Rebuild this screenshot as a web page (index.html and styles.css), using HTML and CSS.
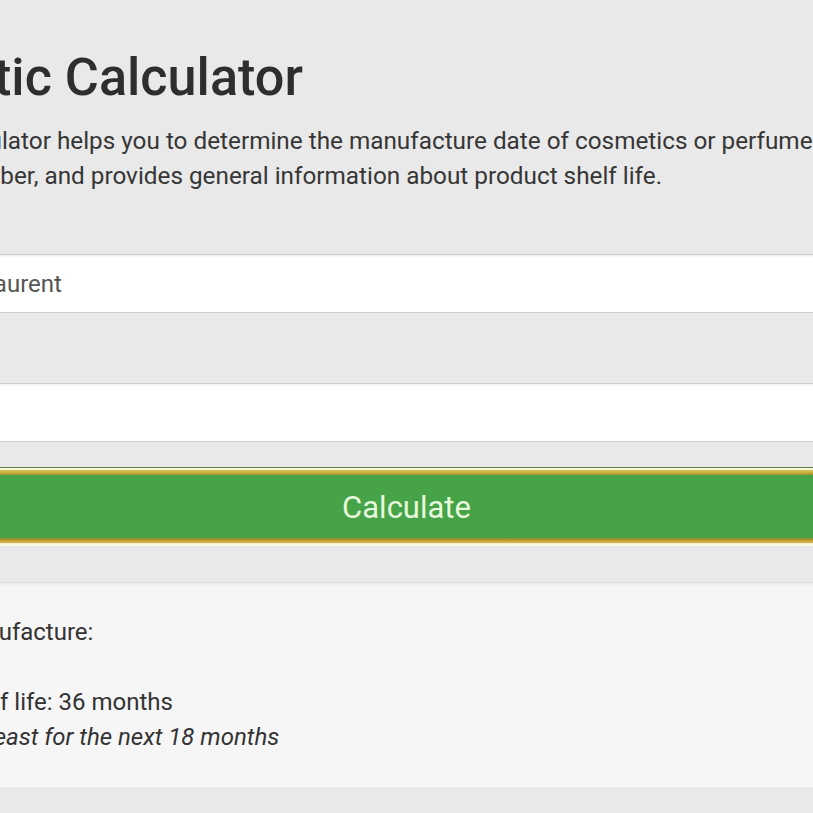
FILE: index.html
```html
<!DOCTYPE html>
<html lang="en">
<head>
<meta charset="utf-8">
<title>Cosmetic Calculator</title>
<link rel="stylesheet" href="styles.css">
</head>
<body>
<main class="page">
  <h1 class="title">Cosmetic Calculator</h1>
  <p class="intro">Cosmetic calculator helps you to determine the manufacture date of cosmetics or perfume<br>by a batch number, and provides general information about product shelf life.</p>
  <form class="form">
    <div class="field">
      <label class="label" for="brand">Brand</label>
      <input class="input" id="brand" type="text" value="Yves Saint Laurent">
    </div>
    <div class="field">
      <label class="label" for="code">Batch code</label>
      <input class="input" id="code" type="text" value="">
    </div>
    <button class="btn" type="button">Calculate</button>
  </form>
  <section class="result">
    <div class="row">Date of manufacture: <strong class="value"></strong></div>
    <div class="row spaced">Product shelf life: 36 months</div>
    <div class="row"><em>It's fresh at least for the next 18 months</em></div>
  </section>
</main>
</body>
</html>
```
FILE: styles.css
```css
html, body {
  margin: 0;
  padding: 0;
}
body {
  background: #e9e9e9;
  overflow: hidden;
  font-family: Roboto, "Liberation Sans", sans-serif;
  color: #333;
  width: 813px;
  height: 813px;
}
.page {
  margin: 0 -163px;
  width: 1139px;
}
.title {
  margin: 48px 0 0 -7px;
  font-size: 52.2px;
  line-height: 60px;
  font-weight: 500;
  color: #2e2e2e;
  white-space: nowrap;
}
.intro {
  margin: 15px 0 0 -2px;
  font-size: 24.3px;
  line-height: 35px;
  color: #363636;
  white-space: nowrap;
}
.form {
  margin: 16px 0 0;
  display: flex;
  flex-direction: column;
}
.field {
  display: flex;
  flex-direction: column;
  margin-bottom: 25px;
}
.label {
  font-size: 24px;
  line-height: 35px;
  margin-bottom: 10px;
  color: #333;
}
.input {
  box-sizing: border-box;
  height: 59px;
  width: 100%;
  margin: 0;
  padding: 0 0 0 26px;
  border: 1px solid #cdcdcd;
  border-radius: 0;
  background: #fff;
  box-shadow: inset 0 2px 2px rgba(0,0,0,0.05);
  font-family: Roboto, "Liberation Sans", sans-serif;
  font-size: 24px;
  color: #555;
  outline: none;
}
.btn {
  box-sizing: border-box;
  height: 79px;
  width: 100%;
  margin: 0;
  padding: 0;
  border: 0;
  border-top: 1px solid #5f7a46;
  background: linear-gradient(to bottom,
    #fbf9e6 0, #f4efcf 2px,
    #dcc657 2px, #c4a93a 5px, #9c9030 7px,
    #46a348 7px, #46a348 70px,
    #8e8a2e 70px, #b89a2e 72px, #d8bd4c 75px,
    #f3eccb 75px, #fdfcee 78px);
  font-family: Roboto, "Liberation Sans", sans-serif;
  font-size: 31px;
  font-weight: 400;
  color: #e7f8dc;
  cursor: pointer;
}
.result {
  margin-top: 36px;
  box-sizing: border-box;
  height: 205px;
  padding: 32px 0 0 31px;
  background: #f6f6f6;
  border-top: 1px solid #dedede;
  border-bottom: 1px solid #fbfbfb;
  box-shadow: inset 0 2px 3px rgba(0,0,0,0.05);
  font-size: 24px;
  line-height: 35px;
  color: #333;
}
.row {
  white-space: nowrap;
}
.row.spaced {
  margin-top: 35px;
  text-indent: -2px;
}
.value {
  font-weight: 500;
}
```
